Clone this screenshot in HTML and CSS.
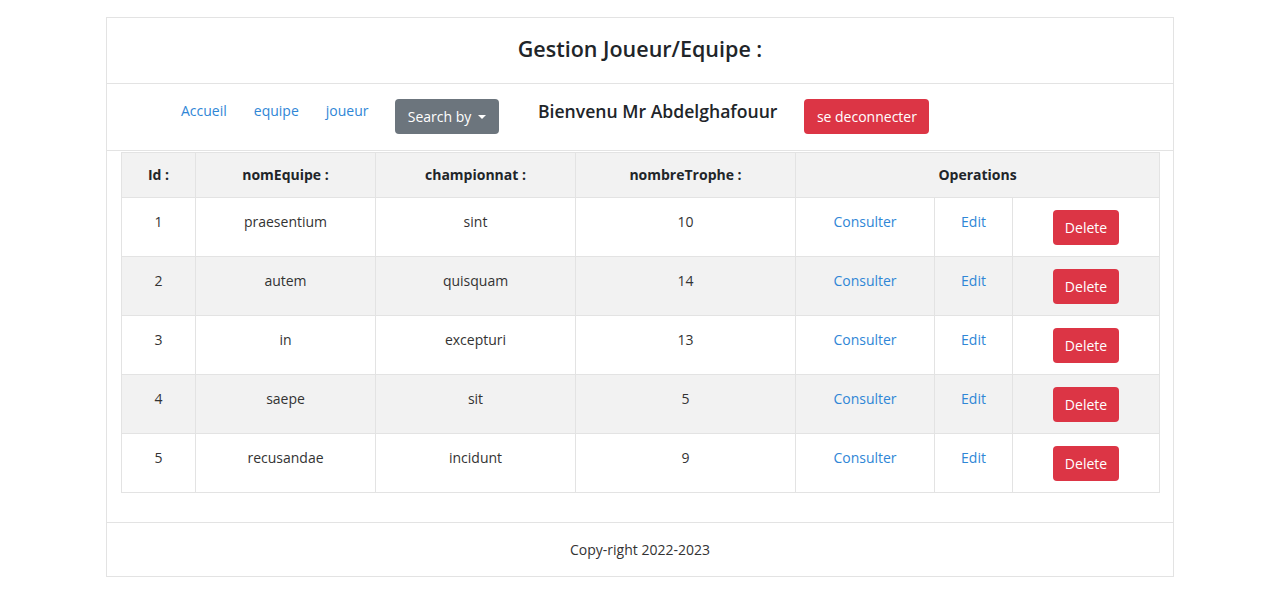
FILE: index.html
```html
<!DOCTYPE html>
<html lang="fr">
<head>
<meta charset="utf-8">
<title>Gestion Joueur/Equipe</title>
<link rel="stylesheet" href="styles.css">
</head>
<body>
<div class="card">
  <div class="card-header">
    <h4 class="title">Gestion Joueur/Equipe :</h4>
  </div>
  <div class="navrow">
    <a class="nav-link first" href="#">Accueil</a>
    <a class="nav-link" href="#">equipe</a>
    <a class="nav-link" href="#">joueur</a>
    <button class="btn btn-secondary dropdown">Search by <span class="caret"></span></button>
    <h5 class="welcome">Bienvenu Mr Abdelghafouur</h5>
    <button class="btn btn-danger">se deconnecter</button>
  </div>
  <div class="card-body">
    <table class="table">
      <colgroup>
        <col class="c1"><col class="c2"><col class="c3"><col class="c4"><col class="c5"><col class="c6"><col class="c7">
      </colgroup>
      <thead>
        <tr>
          <th>Id :</th>
          <th>nomEquipe :</th>
          <th>championnat :</th>
          <th>nombreTrophe :</th>
          <th colspan="3">Operations</th>
        </tr>
      </thead>
      <tbody>
        <tr>
          <td>1</td><td>praesentium</td><td>sint</td><td>10</td>
          <td><a href="#">Consulter</a></td><td><a href="#">Edit</a></td><td><button class="btn btn-danger small">Delete</button></td>
        </tr>
        <tr class="odd">
          <td>2</td><td>autem</td><td>quisquam</td><td>14</td>
          <td><a href="#">Consulter</a></td><td><a href="#">Edit</a></td><td><button class="btn btn-danger small">Delete</button></td>
        </tr>
        <tr>
          <td>3</td><td>in</td><td>excepturi</td><td>13</td>
          <td><a href="#">Consulter</a></td><td><a href="#">Edit</a></td><td><button class="btn btn-danger small">Delete</button></td>
        </tr>
        <tr class="odd">
          <td>4</td><td>saepe</td><td>sit</td><td>5</td>
          <td><a href="#">Consulter</a></td><td><a href="#">Edit</a></td><td><button class="btn btn-danger small">Delete</button></td>
        </tr>
        <tr>
          <td>5</td><td>recusandae</td><td>incidunt</td><td>9</td>
          <td><a href="#">Consulter</a></td><td><a href="#">Edit</a></td><td><button class="btn btn-danger small">Delete</button></td>
        </tr>
      </tbody>
    </table>
  </div>
  <div class="card-footer">Copy-right 2022-2023</div>
</div>
</body>
</html>
```
FILE: styles.css
```css
* { box-sizing: border-box; }
body {
  margin: 0;
  background: #fff;
  font-family: "Open Sans", "Noto Sans", sans-serif;
  font-size: 14px;
  color: #212529;
}
a { color: #2f86d6; text-decoration: none; }

.card {
  width: 1068px;
  margin: 17px 0 0 106px;
  border: 1px solid #e3e3e3;
}
.card-header {
  height: 66px;
  border-bottom: 1px solid #e3e3e3;
  display: flex;
  justify-content: center;
  align-items: center;
  padding-bottom: 5px;
}
.title {
  margin: 0;
  font-size: 21.5px;
  font-weight: 600;
  color: #212529;
}

.navrow {
  height: 67px;
  border-bottom: 1px solid #e3e3e3;
  display: flex;
  align-items: flex-start;
  padding: 15px 0 0 60.5px;
}
.nav-link {
  padding: 0 13.5px;
  line-height: 24px;
  font-size: 14px;
}
.btn {
  font-family: inherit;
  border: none;
  border-radius: 4px;
  height: 35px;
  color: #fff;
  font-size: 14px;
  padding: 0 12px;
  cursor: pointer;
}
.btn-secondary { background: #6c757d; }
.btn-danger { background: #dc3545; }
.dropdown {
  margin-left: 13px;
  width: 104px;
  display: flex;
  align-items: center;
  justify-content: center;
  gap: 7px;
}
.caret {
  width: 0; height: 0;
  border-left: 4px solid transparent;
  border-right: 4px solid transparent;
  border-top: 4px solid #fff;
}
.welcome {
  margin: 0 27px 0 39px;
  font-size: 17.6px;
  font-weight: 600;
  line-height: 24px;
  color: #212529;
}
.navrow .btn-danger { width: 125px; }

.card-body {
  padding: 1px 14px 29px 14px;
}
.table {
  width: 1038px;
  border-collapse: collapse;
  table-layout: fixed;
}
.c1 { width: 74px; }
.c2 { width: 180px; }
.c3 { width: 200px; }
.c4 { width: 220px; }
.c5 { width: 139px; }
.c6 { width: 78px; }
.c7 { width: 147px; }
.table th, .table td {
  border: 1px solid #e3e3e3;
  text-align: center;
  vertical-align: top;
  padding: 11px 8px;
  line-height: 24px;
}
.table th {
  background: #f2f2f2;
  font-weight: 700;
  font-size: 14px;
  height: 44px;
  padding: 10px 8px 10px;
}
.table td {
  height: 58px;
  font-size: 14px;
  color: #333;
  padding-top: 12px;
}
.table tr.odd td { background: #f2f2f2; }
.btn.small {
  width: 66px;
  height: 35px;
  padding: 0;
  margin-top: 0;
  font-size: 14px;
}

.card-footer {
  border-top: 1px solid #e3e3e3;
  height: 54px;
  display: flex;
  align-items: center;
  justify-content: center;
  font-size: 14px;
  color: #333;
}
```
